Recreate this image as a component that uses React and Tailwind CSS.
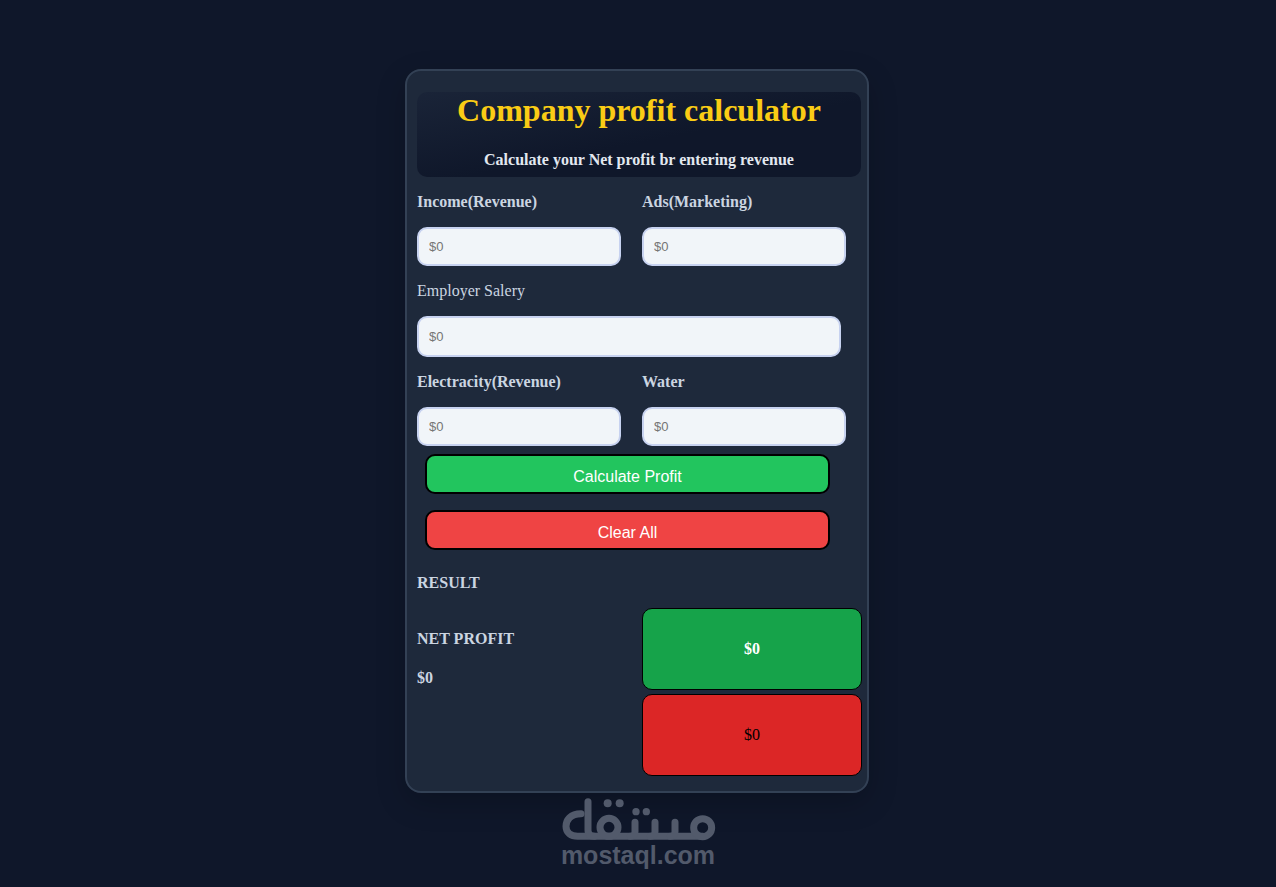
const Field = ({ label, bold = true, className = 'w-[204px] h-[39px]' }) => (
  <div>
    <label className={`block h-[19px] text-[16px] leading-[19px] text-[#cbd5e1] ${bold ? 'font-bold' : 'font-normal'}`}>
      {label}
    </label>
    <input
      type="text"
      placeholder="$0"
      className={`mt-[16px] block rounded-[10px] border-2 border-[#c7d2f0] bg-[#f1f5f9] px-[10px] text-[13px] text-black placeholder:text-[#757575] outline-none font-['Liberation_Sans',sans-serif] ${className}`}
    />
  </div>
);

const MostaqlLogo = () => (
  <svg width="200" height="49" viewBox="0 0 600 147" fill="none" stroke="#525a6b" strokeWidth="21" strokeLinecap="round" strokeLinejoin="round" className="block ml-[5px]">
    {/* lam + bowl */}
    <path d="M120 50 C88 50 75 70 75 88 C75 108 90 118 110 118 L485 118" />
    <path d="M141 14 L141 100 C141 112 148 118 160 118" />
    {/* meem loop */}
    <circle cx="485" cy="92" r="27" />
    {/* qaf loop */}
    <circle cx="204" cy="91" r="27" />
    {/* teeth */}
    <path d="M282 76 L282 104 C282 112 276 118 268 118" />
    <path d="M342 76 L342 104 C342 112 336 118 328 118" />
    <path d="M402 76 L402 104 C402 112 396 118 388 118" />
    {/* dots */}
    <g fill="#525a6b" stroke="none">
      <circle cx="200" cy="19" r="12" />
      <circle cx="236" cy="19" r="12" />
      <circle cx="285" cy="44" r="11" />
      <circle cx="316" cy="44" r="11" />
    </g>
  </svg>
);

export default function App() {
  return (
    <div className="min-h-[887px] bg-[#0f172a] flex flex-col items-center pt-[69px] overflow-hidden font-['Liberation_Serif',serif]">
      <div className="w-[464px] h-[724px] ml-[-2px] shrink-0 rounded-[16px] border-2 border-[#334155] bg-[#1e293b] pt-[21px] pl-[10px] shadow-[0_10px_30px_rgba(0,0,0,0.2)]">
        <div className="w-[444px] h-[85px] rounded-[10px] bg-gradient-to-br from-[#1a2438] to-[#0f172a] to-55% text-center">
          <h1 className="text-[32px] leading-[37px] font-bold text-[#facc15]">Company profit calculator</h1>
          <p className="mt-[22px] text-[16px] leading-[18px] font-bold text-[#e2e8f0]">Calculate your Net profit br entering revenue</p>
        </div>

        <div className="mt-[15px] grid grid-cols-[225px_225px] w-[450px]">
          <Field label="Income(Revenue)" />
          <Field label="Ads(Marketing)" />
        </div>
        <div className="mt-[15px]">
          <Field label="Employer Salery" bold={false} className="w-[424px] h-[41px]" />
        </div>
        <div className="mt-[15px] grid grid-cols-[225px_225px] w-[450px]">
          <Field label="Electracity(Revenue)" />
          <Field label="Water" />
        </div>

        <div className="mt-[8px] ml-[8px] w-[405px] flex flex-col gap-[16px] font-['Liberation_Sans',sans-serif]">
          <button className="h-[40px] pt-[5px] rounded-[10px] border-2 border-black bg-[#22c55e] text-white text-[16px]">Calculate Profit</button>
          <button className="h-[40px] pt-[5px] rounded-[10px] border-2 border-black bg-[#ef4444] text-white text-[16px]">Clear All</button>
        </div>

        <div className="mt-[24px] h-[18px] text-[16px] leading-[18px] font-bold text-[#cbd5e1]">RESULT</div>

        <div className="mt-[16px] grid grid-cols-[225px_220px] w-[445px]">
          <div className="pt-[22px] text-[16px] leading-[18px] font-bold text-[#cbd5e1]">
            <div>NET PROFIT</div>
            <div className="mt-[21px]">$0</div>
          </div>
          <div className="flex flex-col gap-[4px] text-[16px] font-bold">
            <div className="h-[82px] flex items-center justify-center rounded-[10px] border border-black bg-[#16a34a] text-white">$0</div>
            <div className="h-[82px] flex items-center justify-center rounded-[10px] border border-black bg-[#dc2626] text-black font-normal">$0</div>
          </div>
        </div>
      </div>

      <div className="mt-[4px] flex flex-col items-center">
        <MostaqlLogo />
        <div className="mt-[-5px] text-[25px] leading-[28px] font-bold text-[#525a6b] font-['Liberation_Sans',sans-serif]">mostaql.com</div>
      </div>
    </div>
  );
}
